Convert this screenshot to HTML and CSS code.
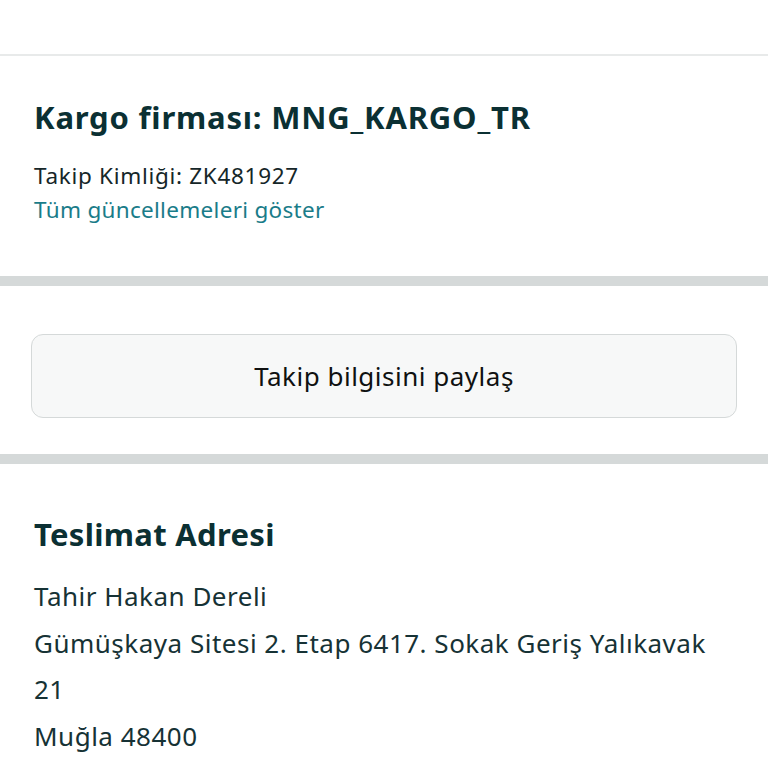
FILE: index.html
```html
<!DOCTYPE html>
<html lang="tr">
<head>
  <meta charset="UTF-8">
  <title>Kargo takibi</title>
  <link rel="stylesheet" href="styles.css">
</head>
<body>
  <div class="topbar"></div>

  <section class="carrier">
    <h2>Kargo firması: MNG_KARGO_TR</h2>
    <p class="tracking-id">Takip Kimliği: ZK481927</p>
    <a class="updates" href="#">Tüm güncellemeleri göster</a>
  </section>

  <div class="divider"></div>

  <section class="share">
    <button type="button">Takip bilgisini paylaş</button>
  </section>

  <div class="divider"></div>

  <section class="address">
    <h2>Teslimat Adresi</h2>
    <p>Tahir Hakan Dereli</p>
    <p>Gümüşkaya Sitesi 2. Etap 6417. Sokak Geriş Yalıkavak</p>
    <p>21</p>
    <p>Muğla 48400</p>
  </section>
</body>
</html>
```

FILE: styles.css
```css
body {
  margin: 0;
  background: #fff;
  font-family: 'Noto Sans', sans-serif;
  color: #0f1111;
}
h2, p {
  margin: 0;
}
h2 {
  font-size: 31px;
  line-height: 36px;
  font-weight: 700;
  letter-spacing: 0.8px;
  color: #0b3033;
}
.topbar {
  height: 54px;
  border-bottom: 2px solid #e8eaea;
}
.carrier {
  padding: 43px 34px 49px;
}
.tracking-id {
  margin-top: 24px;
  font-size: 22.5px;
  line-height: 34px;
  letter-spacing: 0.7px;
  color: #152628;
}
.updates {
  display: block;
  font-size: 22.5px;
  line-height: 34px;
  letter-spacing: 0.3px;
  color: #1a7c89;
  text-decoration: none;
}
.divider {
  height: 10px;
  background: #d5d9d9;
}
.share {
  padding: 48px 31px 36px;
}
.share button {
  display: block;
  width: 100%;
  height: 84px;
  background: #f7f8f8;
  border: 1px solid #d5d9d9;
  border-radius: 12px;
  font-family: inherit;
  font-size: 26px;
  letter-spacing: 0.5px;
  color: #0f1111;
  cursor: pointer;
}
.address {
  padding: 52px 34px 20px;
}
.address h2 {
  margin-bottom: 21px;
  letter-spacing: 0.3px;
}
.address p {
  font-size: 26px;
  line-height: 46.5px;
  letter-spacing: 0.5px;
  color: #163235;
}
```
